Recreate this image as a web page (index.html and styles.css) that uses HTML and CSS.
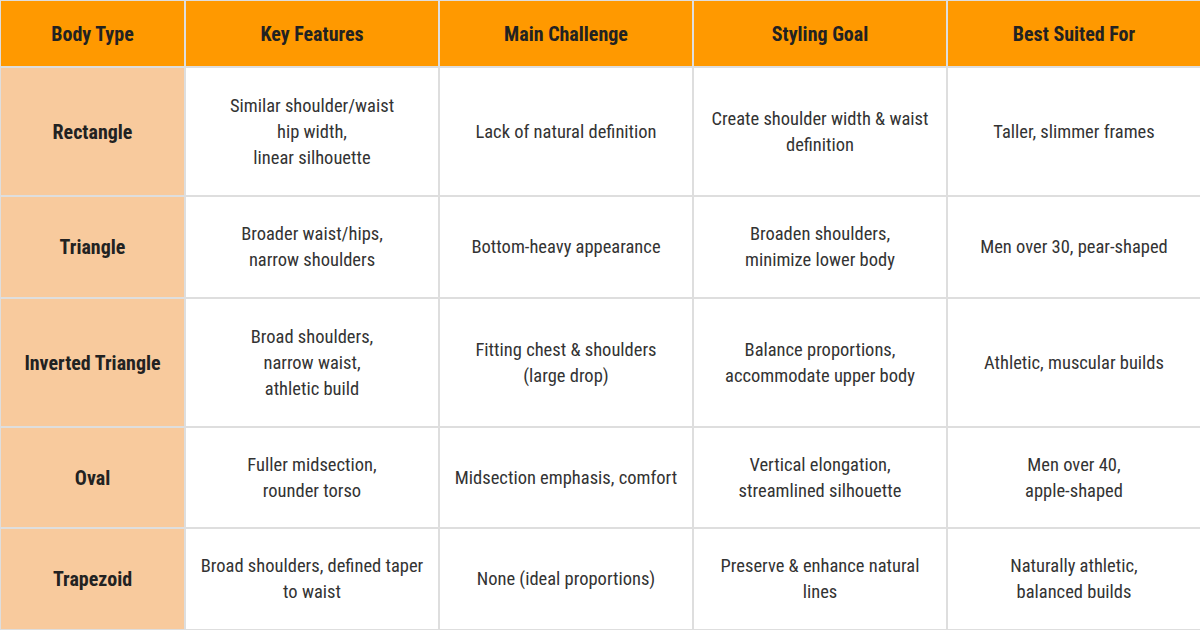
FILE: index.html
```html
<!DOCTYPE html>
<html>
<head>
<meta charset="utf-8">
<link rel="stylesheet" href="styles.css">
</head>
<body>
<table class="grid">
  <colgroup>
    <col class="c-type">
    <col class="c-main"><col class="c-main"><col class="c-main"><col class="c-main">
  </colgroup>
  <thead>
    <tr class="r-head">
      <th>Body Type</th><th>Key Features</th><th>Main Challenge</th><th>Styling Goal</th><th>Best Suited For</th>
    </tr>
  </thead>
  <tbody>
    <tr class="r-a">
      <th class="type">Rectangle</th>
      <td>Similar shoulder/waist<br>hip width,<br>linear silhouette</td>
      <td>Lack of natural definition</td>
      <td>Create shoulder width &amp; waist definition</td>
      <td>Taller, slimmer frames</td>
    </tr>
    <tr class="r-b">
      <th class="type">Triangle</th>
      <td>Broader waist/hips,<br>narrow shoulders</td>
      <td>Bottom-heavy appearance</td>
      <td>Broaden shoulders,<br>minimize lower body</td>
      <td>Men over 30, pear-shaped</td>
    </tr>
    <tr class="r-a">
      <th class="type">Inverted Triangle</th>
      <td>Broad shoulders,<br>narrow waist,<br>athletic build</td>
      <td>Fitting chest &amp; shoulders<br>(large drop)</td>
      <td>Balance proportions,<br>accommodate upper body</td>
      <td>Athletic, muscular builds</td>
    </tr>
    <tr class="r-d">
      <th class="type">Oval</th>
      <td>Fuller midsection,<br>rounder torso</td>
      <td>Midsection emphasis, comfort</td>
      <td>Vertical elongation,<br>streamlined silhouette</td>
      <td>Men over 40,<br>apple-shaped</td>
    </tr>
    <tr class="r-b">
      <th class="type">Trapezoid</th>
      <td>Broad shoulders, defined taper to waist</td>
      <td>None (ideal proportions)</td>
      <td>Preserve &amp; enhance natural lines</td>
      <td>Naturally athletic,<br>balanced builds</td>
    </tr>
  </tbody>
</table>
</body>
</html>
```
FILE: styles.css
```css
html, body {
  margin: 0;
  padding: 0;
  background: #ffffff;
}
body {
  width: 1200px;
  height: 630px;
  overflow: hidden;
}
.grid {
  border-collapse: collapse;
  table-layout: fixed;
  width: 1201px;
  margin-left: -1px;
  margin-top: -1px;
  font-family: "Roboto Condensed", "Liberation Sans Narrow", Roboto, sans-serif;
  font-stretch: condensed;
}
.c-type { width: 185px; }
.c-main { width: 254px; }
.grid th, .grid td {
  border: 2px solid #dedede;
  text-align: center;
  vertical-align: middle;
  padding: 0 14px;
}
.grid td {
  font-size: 18.5px;
  line-height: 26px;
  color: #333333;
  font-weight: 400;
}
.r-head th {
  background: #ff9900;
  color: #222222;
  font-size: 20px;
  font-weight: 700;
  height: 65px;
}
.grid th.type {
  background: #f8ca9d;
  color: #222222;
  font-size: 20px;
  font-weight: 700;
  padding: 0 6px;
}
.r-a { height: 129px; }
.r-b { height: 102px; }
.r-d { height: 101px; }
```
